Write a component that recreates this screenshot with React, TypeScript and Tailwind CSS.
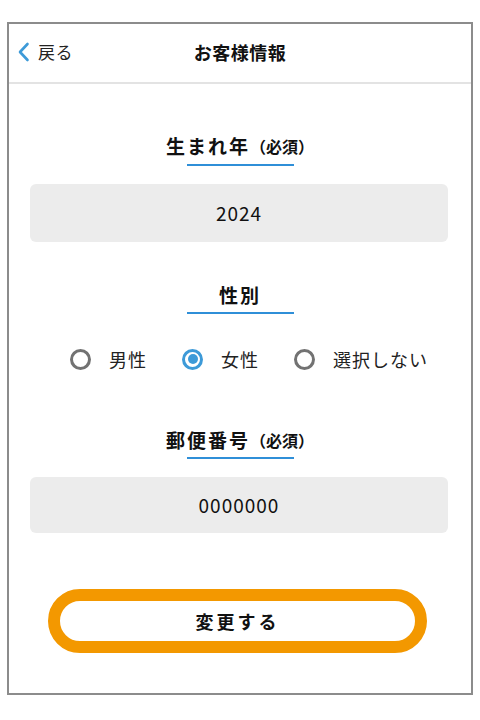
import React, { useState } from "react";

const font = { fontFamily: '"Noto Sans CJK JP", "Noto Sans", sans-serif' };

function Label({ main, req }: { main: string; req?: boolean }) {
  return (
    <div className="flex flex-col items-center">
      <div className="h-[24px] flex items-center justify-center text-[19px] font-bold text-[#111] leading-[24px] tracking-[2px]">
        <span>{main}</span>
        {req && <span className="text-[16px] tracking-[0px]">（必須）</span>}
      </div>
    </div>
  );
}

function Underline({ mt }: { mt: string }) {
  return <div className={`self-center w-[107px] h-[2px] bg-[#2f8fd8] ${mt}`} />;
}

function Radio({ checked, label }: { checked: boolean; label: string }) {
  return (
    <div className="flex items-center">
      <div
        className={
          checked
            ? "w-[21px] h-[21px] rounded-full border-[3px] border-[#3d9ad8] flex items-center justify-center"
            : "w-[21px] h-[21px] rounded-full border-[3px] border-[#727272]"
        }
      >
        {checked && <div className="w-[10px] h-[10px] rounded-full bg-[#3d9ad8]" />}
      </div>
      <span className="ml-[18px] text-[18px] leading-[24px] tracking-[1px] text-[#222]">{label}</span>
    </div>
  );
}

export default function App() {
  const [g] = useState("female");
  return (
    <div className="w-[480px] h-[720px] bg-white pt-[22px]" style={font}>
      <div className="ml-[7px] w-[466px] h-[673px] border-2 border-[#8c8c8c] flex flex-col">
        <div className="relative h-[60px] border-b-2 border-[#e3e3e3] flex items-center justify-center">
          <div className="absolute left-[8px] top-[18px] flex items-center">
            <svg width="13" height="20" viewBox="0 0 13 20">
              <path d="M10.5 2 L3 10 L10.5 18" fill="none" stroke="#3d9ad8" strokeWidth="2.6" strokeLinecap="round" strokeLinejoin="round" />
            </svg>
            <span className="ml-[8px] text-[17px] leading-[20px] text-[#222] tracking-[0.5px]">戻る</span>
          </div>
          <span className="text-[18px] font-bold text-[#111] tracking-[0.5px] mt-[-2px]">お客様情報</span>
        </div>

        <div className="flex flex-col">
          <div className="mt-[50px]">
            <Label main="生まれ年" req />
          </div>
          <Underline mt="mt-[6px]" />
          <div className="mt-[18px] ml-[21px] w-[418px] h-[58px] rounded-[6px] bg-[#ececec] flex items-center justify-center text-[19px] tracking-[1px] text-[#111]">
            2024
          </div>

          <div className="mt-[41px]">
            <Label main="性別" />
          </div>
          <Underline mt="mt-[5px]" />

          <div className="mt-[33px] h-[24px] flex items-center justify-center pl-[18px] gap-[35px]">
            <Radio checked={g === "male"} label="男性" />
            <Radio checked={g === "female"} label="女性" />
            <Radio checked={g === "none"} label="選択しない" />
          </div>

          <div className="mt-[57px]">
            <Label main="郵便番号" req />
          </div>
          <Underline mt="mt-[5px]" />
          <div className="mt-[18px] ml-[21px] w-[418px] h-[56px] rounded-[6px] bg-[#ececec] flex items-center justify-center text-[19px] tracking-[1px] text-[#111]">
            0000000
          </div>

          <div className="mt-[56px] ml-[39px] w-[379px] h-[64px] rounded-full border-[12px] border-[#f39800] bg-white flex items-center justify-center">
            <span className="text-[18px] font-bold tracking-[3px] text-[#111]">変更する</span>
          </div>
        </div>
      </div>
    </div>
  );
}
